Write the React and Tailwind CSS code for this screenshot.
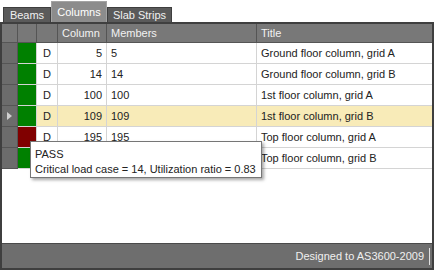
import React from 'react';

const rows = [
  { ok: true, col: 5, members: '5', title: 'Ground floor column, grid A' },
  { ok: true, col: 14, members: '14', title: 'Ground floor column, grid B' },
  { ok: true, col: 100, members: '100', title: '1st floor column, grid A' },
  { ok: true, col: 109, members: '109', title: '1st floor column, grid B', selected: true },
  { ok: false, col: 195, members: '195', title: 'Top floor column, grid A' },
  { ok: true, col: 196, members: '196', title: 'Top floor column, grid B' },
];

function Tab({ label, active, width }) {
  if (active) {
    return (
      <div className={`${width} h-[21px] flex items-center justify-center bg-[#8c8c8c] border border-b-0 border-[#a3a3a3] text-white`}>
        {label}
      </div>
    );
  }
  return (
    <div className={`${width} h-[15px] flex items-center justify-center bg-[#5a5a5a] border border-b-0 border-[#3e3e3e] text-[#f0f0f0]`}>
      {label}
    </div>
  );
}

export default function App() {
  return (
    <div
      className="relative w-[434px] h-[270px] bg-white flex flex-col text-[11px] leading-none"
      style={{ fontFamily: '"Liberation Sans", Arial, sans-serif' }}
    >
      {/* tabs */}
      <div className="h-[22px] flex items-end pl-[3px]">
        <Tab label="Beams" width="w-[48px]" />
        <Tab label="Columns" active width="w-[56px]" />
        <Tab label="Slab Strips" width="w-[65px]" />
      </div>

      <div className="flex-1 flex flex-col border-2 border-[#3f3f3f] min-h-0">
        {/* header */}
        <div className="h-[19px] flex bg-[#787878] text-[#f2f2f2] border-b border-[#555]">
          <div className="w-[16px] border-r border-[#555]" />
          <div className="w-[19px] border-r border-[#555]" />
          <div className="w-[21px] border-r border-[#555]" />
          <div className="w-[49px] border-r border-[#555] flex items-center pl-[4px]">Column</div>
          <div className="w-[150px] border-r border-[#555] flex items-center pl-[4px]">Members</div>
          <div className="flex-1 flex items-center pl-[4px]">Title</div>
        </div>

        {/* rows */}
        <div className="flex-1 flex flex-col bg-white text-[#222]">
          {rows.map((r) => (
            <div key={r.col} className={`h-[21px] flex ${r.selected ? 'bg-[#f8ebb8]' : 'bg-white'}`}>
              <div className="w-[16px] bg-[#6c6c6c] border-r border-b border-[#555] flex items-center justify-center">
                {r.selected && (
                  <svg width="5" height="8" viewBox="0 0 5 8">
                    <path d="M0 0 L5 4 L0 8 Z" fill="#d0d0d0" />
                  </svg>
                )}
              </div>
              <div className={`w-[19px] border-r border-b border-[#d4d4d4] ${r.ok ? 'bg-[#008000]' : 'bg-[#800000]'}`} />
              <div className="w-[21px] border-r border-b border-[#d4d4d4] flex items-center pl-[6px]">D</div>
              <div className="w-[49px] border-r border-b border-[#d4d4d4] flex items-center justify-end pr-[4px]">{r.col}</div>
              <div className="w-[150px] border-r border-b border-[#d4d4d4] flex items-center pl-[4px]">{r.members}</div>
              <div className="flex-1 border-b border-[#d4d4d4] flex items-center pl-[4px]">{r.title}</div>
            </div>
          ))}
        </div>

        {/* footer */}
        <div className="h-[25px] flex items-center justify-end bg-[#6e6e6e] border-t border-[#4a4a4a] text-[#f0f0f0]">
          <span className="pr-[5px]">Designed to AS3600-2009</span>
          <div className="w-px h-[17px] bg-[#e0e0e0] mr-[2px]" />
        </div>
      </div>

      {/* tooltip */}
      <div className="absolute left-[30px] top-[141px] w-[232px] h-[37px] bg-white border border-[#767676] shadow-[2px_2px_3px_rgba(0,0,0,0.35)] pl-[4px] pt-[7px] text-[#222] flex flex-col gap-[4px] whitespace-nowrap">
        <div>PASS</div>
        <div>Critical load case = 14, Utilization ratio = 0.83</div>
      </div>
    </div>
  );
}
